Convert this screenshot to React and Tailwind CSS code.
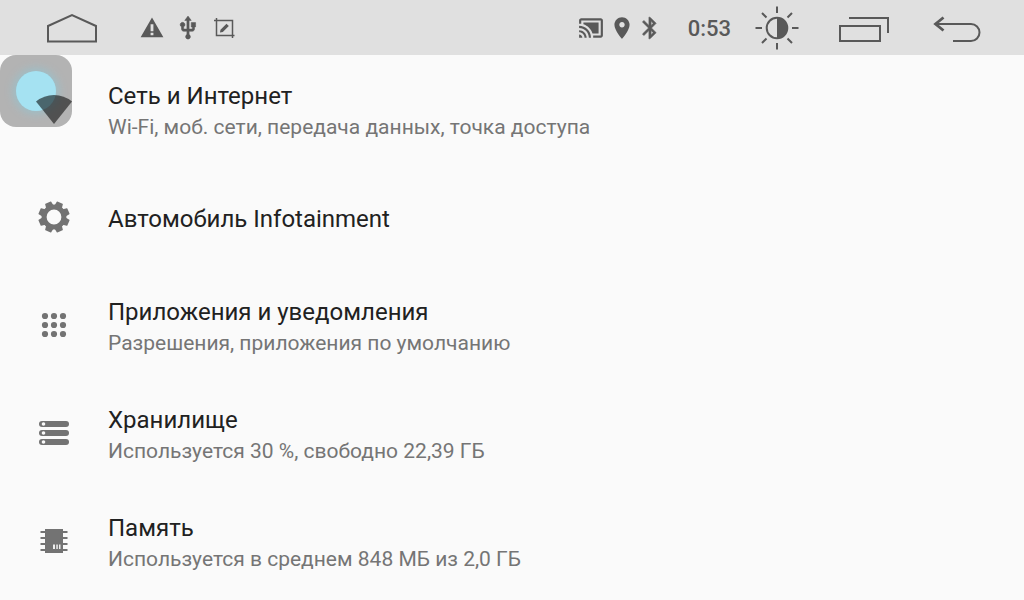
import React from "react";

const ITEMS = [
  { title: "Сеть и Интернет", sub: "Wi-Fi, моб. сети, передача данных, точка доступа", icon: WifiIcon },
  { title: "Автомобиль Infotainment", icon: GearIcon },
  { title: "Приложения и уведомления", sub: "Разрешения, приложения по умолчанию", icon: AppsIcon },
  { title: "Хранилище", sub: "Используется 30 %, свободно 22,39 ГБ", icon: StorageIcon },
  { title: "Память", sub: "Используется в среднем 848 МБ из 2,0 ГБ", icon: MemoryIcon },
];

function WifiIcon() {
  return (
    <svg viewBox="0 0 36 36" className="size-9" aria-hidden="true">
      <path d="M0 10.5Q8 4 18 4T36 10.5L18 33Z" fill="#000" fillOpacity="0.55" />
    </svg>
  );
}

function GearIcon() {
  return (
    <svg viewBox="-18 -18 36 36" className="size-9" aria-hidden="true" fill="#737373">
      {[0, 45, 90, 135, 180, 225, 270, 315].map((a) => (
        <path key={a} d="M-4.2 -9L-3.3 -15.2Q-3.2 -15.6 -2.8 -15.6H2.8Q3.2 -15.6 3.3 -15.2L4.2 -9Z" transform={`rotate(${a + 22.5})`} />
      ))}
      <circle r="9.9" fill="none" stroke="#737373" strokeWidth="5" />
    </svg>
  );
}

function AppsIcon() {
  return (
    <svg viewBox="0 0 36 36" className="size-9" aria-hidden="true" fill="#737373">
      {[9, 18, 27].map((y) => [9, 18, 27].map((x) => <circle key={`${x}-${y}`} cx={x} cy={y} r="3.1" />))}
    </svg>
  );
}

function StorageIcon() {
  return (
    <svg viewBox="0 0 36 36" className="size-9" aria-hidden="true">
      {[6, 15, 24].map((y) => (
        <g key={y}>
          <rect x="3" y={y} width="30" height="6" rx="3" fill="#737373" />
          <circle cx="7.5" cy={y + 3} r="1.8" fill="#fafafa" />
        </g>
      ))}
    </svg>
  );
}

function MemoryIcon() {
  return (
    <svg viewBox="0 0 36 36" className="size-9" aria-hidden="true">
      <path d="M9 6h18v24H9zM4.500 8h27v2h-27zM4.500 14h27v2h-27zM4.500 20h27v2h-27zM4.500 26h27v2h-27z" fill="#737373" />
      <path d="M17 21.500h2v4.500h-2zM20.300 21.500h1.500v4.500h-1.500zM23 21.500h1.500v4.500H23z" fill="#eee" />
    </svg>
  );
}

function StatusBar() {
  return (
    <header className="flex h-[55px] items-center justify-between bg-[#e0e0e0] pr-[43px] pl-[46px] text-[#595959]">
      <div className="flex items-center">
        <button type="button" aria-label="Домой" className="mr-[41px]">
          <svg viewBox="0 0 52 30" className="h-[30px] w-[52px]" fill="none" stroke="currentColor" strokeWidth="2">
            <path d="M2 13L26 2L50 13V28.500H2Z" />
          </svg>
        </button>
        <div className="flex items-center gap-2.5">
          <svg viewBox="0 0 24 24" className="size-[26px]" fill="currentColor" aria-hidden="true">
            <path fillRule="evenodd" d="M1.500 20.500h21L12 2.300zM10.700 8.500h2.600v6.500h-2.600zM10.700 16.300h2.600v2.400h-2.600z" />
          </svg>
          <svg viewBox="0 0 24 24" className="size-[26px]" fill="currentColor" stroke="currentColor" strokeWidth="0.5" aria-hidden="true">
            <path d="M15 7v4h1v2h-3V5h2l-3-4-3 4h2v8H8v-2.070c.7-.37 1.200-1.080 1.200-1.930 0-1.210-.99-2.200-2.200-2.200-1.210 0-2.200.99-2.200 2.200 0 .85.5 1.560 1.200 1.930V13c0 1.110.89 2 2 2h3v3.050c-.71.37-1.200 1.100-1.200 1.950 0 1.220.99 2.200 2.200 2.200 1.210 0 2.200-.98 2.200-2.200 0-.85-.49-1.580-1.200-1.950V15h3c1.110 0 2-.89 2-2v-2h1V7h-4z" />
          </svg>
          <svg viewBox="0 0 26 26" className="size-[26px]" fill="none" stroke="currentColor" strokeWidth="1.500" aria-hidden="true">
            <path d="M3 5.500H21.500V20M5.500 3V20.500H23.500M21.500 20V23" />
            <path d="M9 17.500L9.500 14.700L15.500 8.700L17.800 11L11.800 17Z" fill="currentColor" stroke="none" />
          </svg>
        </div>
      </div>
      <div className="flex items-center">
        <div className="mr-7 flex items-center gap-2">
          <svg viewBox="0 0 24 24" className="size-[26px]" fill="currentColor" aria-hidden="true">
            <path d="M1 18v3h3c0-1.660-1.340-3-3-3zm0-4v2c2.760 0 5 2.240 5 5h2c0-3.870-3.130-7-7-7zM19 7H5v1.630c3.960 1.280 7.090 4.410 8.370 8.370H19V7zM1 10v2c4.970 0 9 4.030 9 9h2c0-6.080-4.930-11-11-11zm20-7H3c-1.100 0-2 .9-2 2v3h2V5h18v14h-7v2h7c1.100 0 2-.9 2-2V5c0-1.100-.9-2-2-2z" />
          </svg>
          <svg viewBox="3 0 18 24" className="h-[26px] w-5" fill="currentColor" aria-hidden="true">
            <path d="M12 2C8.130 2 5 5.130 5 9c0 5.250 7 13 7 13s7-7.750 7-13c0-3.870-3.130-7-7-7zm0 9.500c-1.380 0-2.500-1.120-2.500-2.500s1.120-2.500 2.500-2.500 2.500 1.120 2.500 2.500-1.120 2.500-2.500 2.500z" />
          </svg>
          <svg viewBox="3 0 18 24" className="h-[26px] w-5" fill="currentColor" stroke="currentColor" strokeWidth="0.5" aria-hidden="true">
            <path d="M17.710 7.710L12 2h-1v7.590L6.410 5 5 6.410 10.590 12 5 17.590 6.410 19 11 14.410V22h1l5.710-5.710-4.300-4.290 4.300-4.290zM13 5.830l1.880 1.880L13 9.590V5.830zm1.880 10.460L13 18.170v-3.760l1.880 1.880z" />
          </svg>
        </div>
        <time className="mr-6 pt-0.5 text-[22px] leading-7 font-medium">0:53</time>
        <button type="button" aria-label="Яркость" className="mr-10">
          <svg viewBox="-22 -22 44 44" className="size-11" fill="none" stroke="currentColor" strokeWidth="2">
            <circle r="10.300" />
            <path d="M0 -10.500A10.500 10.500 0 0 1 0 10.500Z" fill="currentColor" stroke="none" />
            <path d="M0 -21.500V-15M0 15V21.500M-21.500 0H-15M15 0H21.500M-15 -15L-10.500 -10.500M15 -15L10.500 -10.500M-15 15L-10.500 10.500M15 15L10.500 10.500" />
          </svg>
        </button>
        <button type="button" aria-label="Недавние" className="mr-11">
          <svg viewBox="0 0 50 30" className="h-[30px] w-[50px]" fill="none" stroke="currentColor" strokeWidth="2">
            <path d="M1 13H41V28H1ZM10 5H49V20" />
          </svg>
        </button>
        <button type="button" aria-label="Назад">
          <svg viewBox="0 0 48 30" className="h-[30px] w-12" fill="none" stroke="currentColor" strokeWidth="2">
            <path d="M2 11H38A8.500 8.500 0 0 1 38 28H20" />
            <path d="M10.500 4.500L2.500 11L10.500 17.500" strokeWidth="2.800" />
          </svg>
        </button>
      </div>
    </header>
  );
}

function AssistButton() {
  return (
    <button
      type="button"
      aria-label="Плавающая кнопка"
      className="absolute top-0 left-0 flex size-18 items-center justify-center rounded-2xl bg-[#b3b3b3]"
    >
      <span className="size-10 rounded-full bg-[#a5e2f2] shadow-[0_0_8px_3px_#9dbfc8]" />
    </button>
  );
}

export default function App() {
  return (
    <div className="h-screen overflow-hidden bg-[#fafafa] font-[Roboto,sans-serif]">
      <StatusBar />
      <main className="relative">
        <AssistButton />
        <ul>
          {ITEMS.map(({ title, sub, icon: Icon }) => (
            <li key={title}>
              <a href="#" className="relative flex h-27 items-center gap-9 px-9">
                <Icon />
                <div className="pt-1">
                  <h2 className="text-2xl leading-8 text-[#212121]">{title}</h2>
                  {sub && <p className="text-[21px] leading-[30px] text-[#757575]">{sub}</p>}
                </div>
              </a>
            </li>
          ))}
        </ul>
      </main>
    </div>
  );
}
